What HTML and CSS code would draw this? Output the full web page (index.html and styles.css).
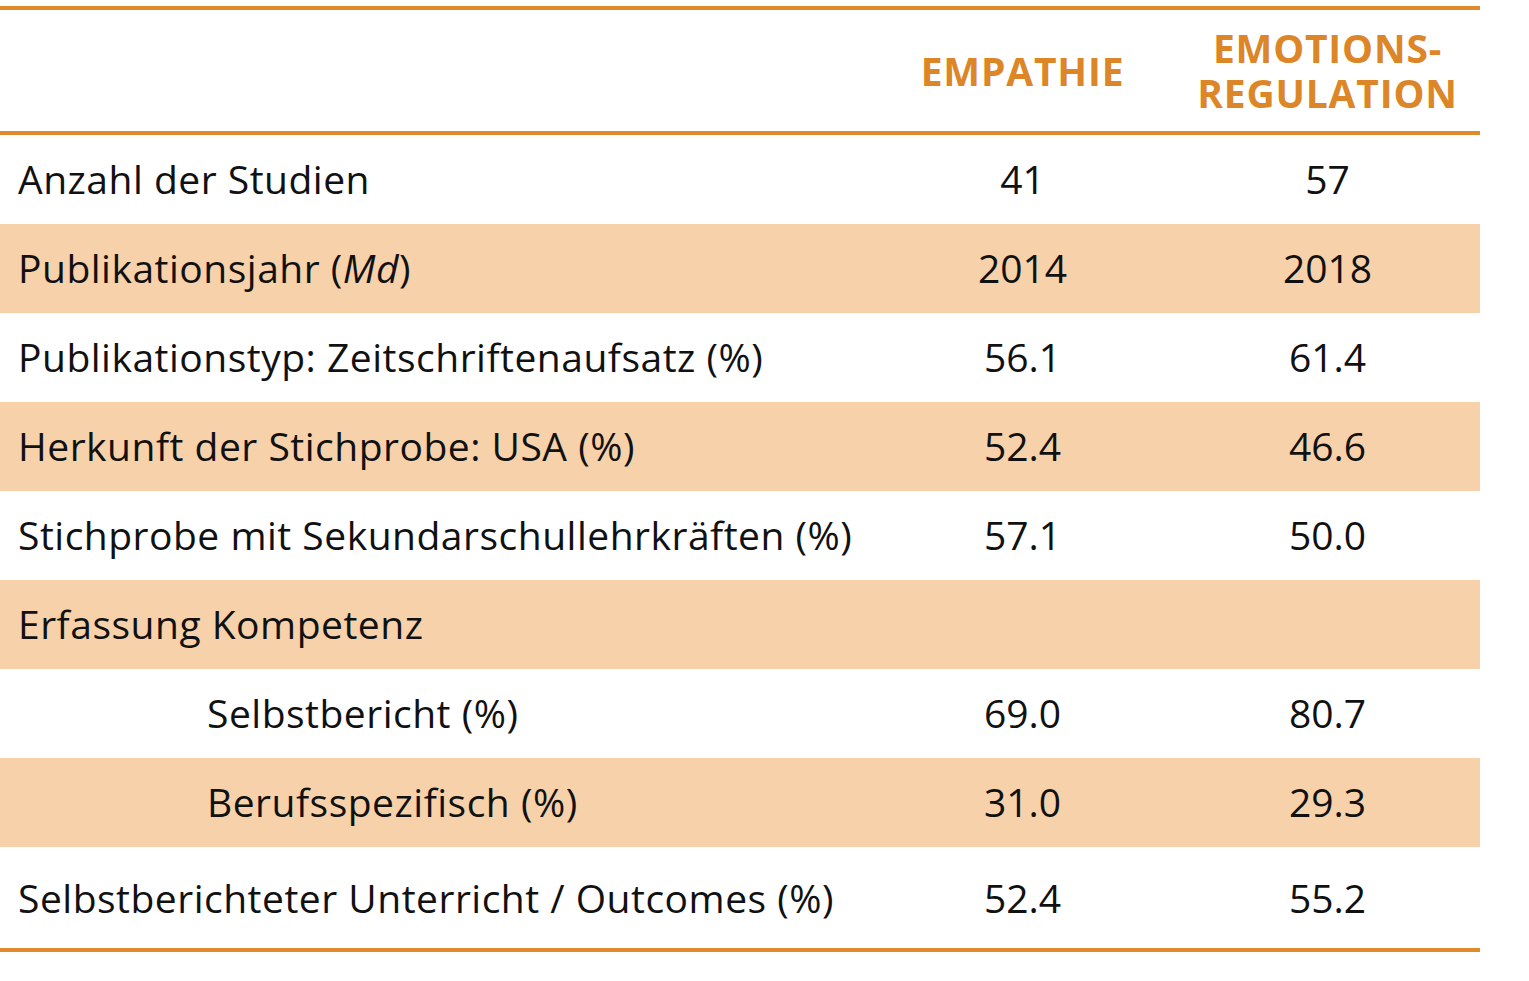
FILE: index.html
```html
<!DOCTYPE html>
<html lang="de">
<head>
<meta charset="utf-8">
<title>Tabelle</title>
<link rel="stylesheet" href="styles.css">
</head>
<body>
<table class="data">
  <thead>
    <tr>
      <th class="label-col"></th>
      <th class="val-col">EMPATHIE</th>
      <th class="val-col">EMOTIONS-<br>REGULATION</th>
    </tr>
  </thead>
  <tbody>
    <tr><td class="label">Anzahl der Studien</td><td class="val">41</td><td class="val">57</td></tr>
    <tr class="shade"><td class="label">Publikationsjahr (<em>Md</em>)</td><td class="val">2014</td><td class="val">2018</td></tr>
    <tr><td class="label">Publikationstyp: Zeitschriftenaufsatz (%)</td><td class="val">56.1</td><td class="val">61.4</td></tr>
    <tr class="shade"><td class="label">Herkunft der Stichprobe: USA (%)</td><td class="val">52.4</td><td class="val">46.6</td></tr>
    <tr><td class="label">Stichprobe mit Sekundarschullehrkräften (%)</td><td class="val">57.1</td><td class="val">50.0</td></tr>
    <tr class="shade"><td class="label">Erfassung Kompetenz</td><td class="val"></td><td class="val"></td></tr>
    <tr><td class="label sub">Selbstbericht (%)</td><td class="val">69.0</td><td class="val">80.7</td></tr>
    <tr class="shade"><td class="label sub">Berufsspezifisch (%)</td><td class="val">31.0</td><td class="val">29.3</td></tr>
    <tr class="last"><td class="label">Selbstberichteter Unterricht / Outcomes (%)</td><td class="val">52.4</td><td class="val">55.2</td></tr>
  </tbody>
</table>
</body>
</html>
```

FILE: styles.css
```css
html, body {
  margin: 0;
  padding: 0;
  background: #ffffff;
}

body {
  font-family: "Open Sans", "Noto Sans", sans-serif;
  color: #111111;
}

.data {
  margin-top: 6px;
  width: 1480px;
  border-collapse: collapse;
  border-top: 4px solid #e08a2c;
  border-bottom: 4px solid #e08a2c;
  table-layout: fixed;
}

.data thead tr {
  border-bottom: 4px solid #e08a2c;
}

.label-col {
  width: 870px;
}

.val-col {
  width: 305px;
}

.data th {
  height: 120px;
  padding: 0 0 1px 0;
  color: #dc8628;
  font-weight: 700;
  font-size: 39px;
  line-height: 45px;
  text-align: center;
  vertical-align: middle;
  letter-spacing: 0.8px;
}

.data td {
  height: 86px;
  padding: 0 0 3px 0;
  font-size: 39px;
  font-weight: 500;
  vertical-align: middle;
}

.data tr.last td {
  height: 101px;
  padding-bottom: 0;
}

.shade td {
  background: #f7d1a9;
}

.label {
  padding-left: 18px !important;
  white-space: nowrap;
  letter-spacing: 0.5px;
}

.label.sub {
  padding-left: 207px !important;
}

.val {
  text-align: center;
}

em {
  font-style: italic;
}
```
